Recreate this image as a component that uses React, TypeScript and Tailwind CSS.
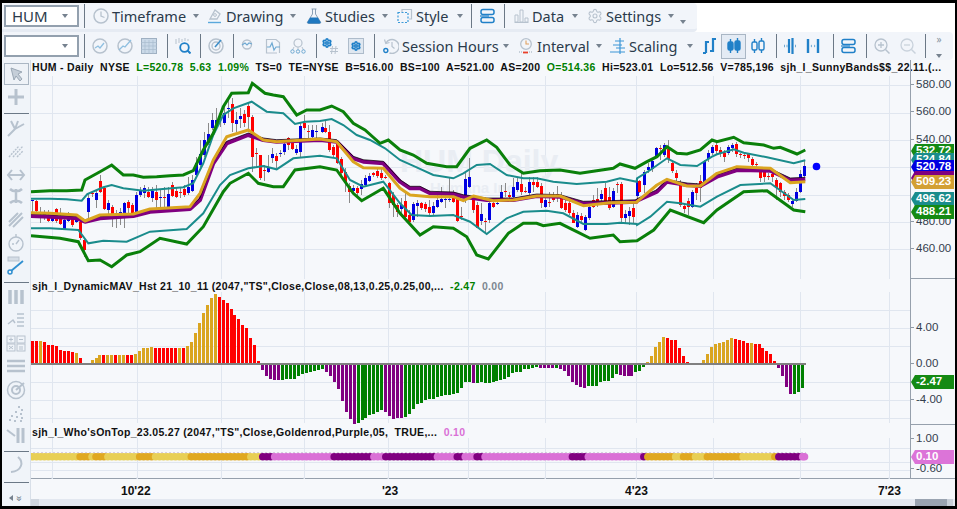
import React from 'react';
import { Settings } from 'lucide-react';

// reading of the reference: [x, wickTop, wickBottom, bodyTop, bodyBottom, 0 red / 1 blue], 3x crop coords
type Candle = number[];
const panelA: Candle[] = [
  [97,420,455,420,421,1],[109,420,455,423,452,0],[121,440,490,460,461,0],[133,450,480,455,470,1],[145,450,485,470,483,0],[157,460,485,473,483,1],[169,445,490,448,483,0],[181,445,495,470,492,0],[193,470,510,480,508,1],[205,455,485,472,482,1],[217,465,500,476,495,0],[229,465,490,476,486,1],[241,480,540,485,535,0],[253,535,590,540,570,0],
  [265,400,475,413,455,1],[277,395,410,400,403,0],[289,390,445,400,420,1],[301,345,400,363,395,0],[313,380,450,385,447,0],[325,420,475,430,450,1],[337,435,500,440,465,0],[349,450,505,474,476,1],[361,445,495,456,459,1],[373,425,503,430,475,1],[385,420,460,427,443,0],[397,430,462,435,458,0],[409,395,460,405,458,1],[421,380,410,392,405,1],[433,375,415,385,398,1],[445,380,415,395,410,0],[457,380,425,393,413,1],[469,375,445,395,420,0],[481,390,440,412,414,1],[493,380,442,410,412,0],[505,380,445,402,440,1],[517,365,412,375,408,0],[529,380,415,393,410,0],[541,380,415,396,398,0],[553,375,410,388,405,0],[565,350,405,382,398,1],[577,345,395,360,392,1],[589,290,350,310,345,1],[601,240,320,283,315,1],[613,215,290,240,285,1],[625,190,255,222,250,1],[637,160,210,180,205,1],[649,145,200,180,195,1],[661,160,200,178,180,0],[673,140,195,160,190,1],[685,115,175,145,147,1],[697,115,215,132,190,0],[709,155,215,180,192,1],[721,145,205,168,178,1],[733,150,200,162,190,0],[745,125,215,138,170,0],[757,165,335,172,290,0],[769,265,320,280,282,0],[781,285,360,285,353,0],[793,315,362,330,332,0],[805,285,340,322,335,1],[817,265,310,282,295,1],[829,280,325,288,302,0],[841,270,290,280,283,1],[853,240,285,252,276,1],[865,230,270,235,255,0],[877,245,270,250,267,0],[889,255,285,267,278,1],[901,190,290,198,275,1],[913,165,210,188,205,0],[925,195,235,212,214,0],[937,195,240,210,232,1],[949,195,240,213,216,1],
];
const panelB: Candle[] = [
  [6,190,220,200,215,1],[16,180,220,205,215,0],[26,195,275,217,270,0],[38,255,290,262,285,0],[50,245,312,250,310,0],[62,290,350,297,340,0],[74,325,395,335,370,0],[86,370,430,378,395,0],[98,375,405,385,393,1],[110,378,408,385,400,0],[122,360,405,372,387,1],[134,345,380,354,375,1],[146,340,365,348,362,1],[158,335,350,340,346,0],[170,320,355,333,348,0],[182,325,360,340,355,0],[194,345,358,350,353,0],
  [206,365,445,370,430,0],[218,395,470,405,435,0],[230,430,470,435,455,0],[242,415,470,435,447,1],[254,400,475,423,470,0],[266,450,485,465,485,0],[278,425,485,432,480,1],[290,420,470,428,438,1],[302,425,450,430,445,0],[314,425,455,432,447,0],[326,420,470,440,460,0],[338,425,465,438,460,1],[350,400,445,420,440,1],[362,380,430,418,425,1],[374,400,445,418,421,1],[386,350,425,418,421,1],[398,390,430,395,425,0],[410,405,485,412,482,0],[422,440,480,467,469,0],[434,340,430,357,405,1],[446,295,385,350,380,1],[458,410,460,420,450,0],[470,425,505,435,503,0],[482,430,495,462,484,1],[494,475,520,482,485,0],[506,420,490,428,480,1],[518,420,445,428,442,0],[530,420,436,428,432,1],[542,375,420,395,420,1],[554,370,412,393,396,0],[566,395,415,405,412,0],[578,355,415,380,410,1],[590,350,395,365,390,1],[602,340,405,372,395,0],[614,380,400,392,395,0],[626,350,405,365,400,1],[638,350,395,365,375,0],[650,352,385,365,382,0],[662,370,445,378,430,0],[674,410,445,420,442,1],[686,395,440,425,427,0],[698,395,425,405,420,0],[710,378,425,403,408,0],[722,395,447,405,445,0],[734,420,455,428,450,0],[746,415,465,430,460,0],[758,450,490,460,490,0],[770,455,505,465,502,1],[782,460,490,467,480,0],[794,465,512,470,510,1],[806,430,480,440,475,1],[818,405,445,420,440,0],[830,385,440,418,425,0],[842,390,430,402,418,1],[854,370,430,385,425,0],[866,380,450,410,445,0],[878,385,445,393,440,1],[890,365,400,372,375,0],[902,365,490,372,475,0],[914,450,490,462,475,1],[926,440,495,453,468,1],[938,430,490,445,470,0],[950,355,425,363,408,1],
];
const panelC: Candle[] = [
  [5,360,400,363,395,0],[20,330,400,335,375,1],[33,310,340,322,330,1],[45,295,335,303,328,1],[57,260,295,265,290,1],[69,255,300,265,267,0],[81,250,290,255,285,1],[93,240,310,268,298,0],[105,300,340,310,333,0],[118,330,365,340,355,0],[130,360,440,375,435,0],[142,430,460,438,447,0],[154,415,465,423,442,0],[166,390,445,395,440,1],[178,370,420,385,400,0],[190,345,425,363,385,0],[202,300,370,303,365,1],[214,270,305,280,298,1],[226,255,285,262,278,1],[238,250,285,255,272,0],[250,262,290,270,280,0],[262,270,305,280,290,0],[274,255,285,262,280,1],[286,250,275,255,265,1],[298,245,290,252,282,0],[310,278,295,283,285,0],[322,280,298,285,287,0],[334,280,305,283,295,0],[346,290,320,298,315,0],[358,305,322,313,316,0],[370,330,365,333,355,0],[382,330,365,335,350,0],[394,340,360,347,350,0],[406,338,365,342,350,0],[418,355,420,360,385,0],[430,365,410,370,395,0],[442,390,420,395,408,0],[454,400,425,405,420,0],[466,415,440,423,431,1],[478,385,425,396,423,1],[490,330,400,343,395,1],[502,300,352,318,348,1],
];

const scr = (off: number, rows: number[][]) => rows.map(([x, y]) => `${(off + x / 3).toFixed(1)},${(60 + y / 3).toFixed(1)}`);
const band = (a: number[][], b: number[][], c: number[][]) => [...scr(0, a), ...scr(320, b), ...scr(637, c)].join(' ');

const greenTop = band(
  [[93,395],[150,392],[200,392],[245,390],[255,360],[300,335],[335,315],[370,345],[400,345],[430,352],[470,350],[510,347],[550,345],[580,332],[610,270],[640,220],[670,140],[695,100],[745,98],[757,70],[795,100],[820,105],[850,110],[890,165],[920,150],[960,150]],
  [[35,138],[70,155],[100,190],[135,210],[180,250],[205,240],[240,270],[280,285],[320,310],[380,320],[410,320],[450,265],[500,240],[530,262],[570,315],[610,340],[660,332],[720,330],[780,340],[880,325],[900,312],[945,325]],
  [[30,305],[60,290],[90,260],[120,280],[150,282],[190,270],[225,240],[240,245],[290,232],[320,248],[380,255],[410,265],[430,262],[480,282],[505,270]],
);
const tealTop = band(
  [[93,416],[150,416],[200,418],[245,422],[262,402],[310,382],[335,375],[370,385],[430,392],[480,388],[550,382],[580,370],[610,310],[640,225],[670,165],[700,145],[755,125],[800,155],[850,160],[885,192],[915,185],[960,183]],
  [[35,177],[70,195],[110,225],[150,240],[195,265],[240,300],[290,322],[340,345],[400,355],[430,340],[470,315],[510,312],[560,345],[610,355],[650,355],[700,365],[770,372],[860,365],[900,355],[950,365]],
  [[0,355],[40,330],[90,295],[130,315],[180,318],[225,290],[240,283],[290,268],[320,278],[390,292],[470,310],[505,301]],
);
const purpleMid = band(
  [[93,468],[150,470],[230,475],[255,485],[300,475],[400,468],[450,455],[570,447],[600,420],[640,310],[680,250],[745,225],[790,240],[830,245],[960,240]],
  [[50,245],[100,295],[130,305],[190,310],[240,365],[270,385],[300,385],[330,400],[400,402],[430,410],[500,420],[580,420],[650,408],[720,410],[790,430],[870,428],[950,425]],
  [[0,422],[60,395],[90,365],[150,375],[190,378],[240,350],[300,330],[400,332],[460,360],[505,358]],
);
const goldMid = band(
  [[93,458],[150,460],[230,465],[255,483],[300,465],[400,462],[450,447],[570,440],[600,400],[640,300],[680,230],[745,210],[790,240],[830,245],[960,237]],
  [[50,245],[100,305],[130,323],[190,325],[240,385],[270,405],[330,410],[400,410],[430,422],[460,408],[520,422],[580,420],[650,408],[720,408],[790,437],[870,428],[950,427]],
  [[0,425],[60,375],[90,358],[150,378],[190,378],[240,340],[300,320],[400,325],[460,368],[505,365]],
);
const tealLow = band(
  [[93,505],[150,505],[235,510],[265,550],[310,542],[380,545],[450,515],[560,507],[610,460],[660,375],[690,345],[745,325],[790,318],[830,328],[880,295],[960,287]],
  [[50,295],[90,360],[130,380],[190,365],[240,430],[275,465],[330,468],[400,465],[450,485],[500,522],[560,475],[610,455],[680,452],[730,460],[790,492],[860,492],[900,488],[950,492]],
  [[0,495],[40,470],[90,425],[130,430],[190,440],[240,410],[310,375],[400,370],[470,420],[505,417]],
);
const greenLow = band(
  [[93,527],[180,535],[235,545],[265,602],[300,600],[335,620],[380,585],[420,575],[480,535],[560,552],[610,500],[670,395],[690,370],[745,340],[775,370],[820,380],[850,380],[885,330],[960,320]],
  [[50,330],[100,400],[125,422],[190,385],[240,460],[300,525],[340,500],[400,505],[440,530],[470,585],[505,597],[565,520],[610,490],[650,490],[670,497],[720,490],[770,515],[810,535],[880,525],[900,545],[950,542]],
  [[0,542],[50,510],[100,450],[200,488],[240,450],[320,395],[390,392],[470,450],[505,455]],
);

const histColors: Record<string, string> = { r: '#ff0000', g: '#daa520', p: '#800080', n: '#008000' };
const hist = 'r23 r23 g23 r22 r19 r19 r18 r14 r13 r13 r12 g11 r6 r1 g1 g4 g6 g9 r9 g9 g9 r9 g9 g9 r9 r9 g10 g13 g16 g16 g17 r16 r16 r16 r16 r16 r16 g16 r16 g18 g22 g31 g41 g51 g59 g66 g70 r67 r64 r61 r55 r49 r45 r39 r36 r26 r19 r3 p6 p12 p15 p16 p16 n16 n15 n15 n15 n12 n10 n9 n8 n7 n6 n5 p8 p12 p18 p25 p37 p48 p55 p60 n59 n56 n54 n51 n50 n48 n46 p48 p52 p55 p54 p54 n53 n50 n45 n40 n39 n36 n35 n35 n33 n32 n31 n31 n30 n29 n24 n18 n18 p19 n19 n18 n19 n19 n18 n17 n16 n15 n13 n9 n8 n8 n5 n5 n4 n3 p4 p4 p4 p4 n4 p5 p7 p12 p18 p21 p23 p24 n22 n22 n22 n18 n17 n17 n14 n10 p11 p12 p12 p12 n8 n7 n3 g2 g8 g17 g22 g27 r26 r24 r24 r16 r8 r2 r1 r1 r1 g4 g10 g17 g20 g21 g22 g24 g26 r25 r24 r23 r21 g21 r20 r20 r16 r13 r10 r3 p4 p12 p23 p30 n30 n28 n24'
  .split(' ')
  .map((t) => ({ c: t[0], h: Number(t.slice(1)) }));

// who's on top ribbon: [segment end x, colour]
const ribbon: [number, string][] = [[78,'#e8cf55'],[90,'#e0a820'],[93,'#e8cf55'],[105,'#e0a820'],[137,'#e8cf55'],[153,'#e0a820'],[188,'#e8cf55'],[250,'#e0a820'],[262,'#e8cf55'],[273,'#800080'],[333,'#da70d6'],[370,'#800080'],[385,'#da70d6'],[437,'#800080'],[457,'#da70d6'],[462,'#800080'],[477,'#da70d6'],[485,'#800080'],[569,'#da70d6'],[585,'#800080'],[640,'#da70d6'],[645,'#800080'],[674,'#e0a820'],[681,'#e8cf55'],[694,'#e0a820'],[705,'#e8cf55'],[742,'#e0a820'],[772,'#e8cf55'],[777,'#e0a820'],[802,'#800080'],[809,'#da70d6']];
const ribbonColor = (x: number) => (ribbon.find(([end]) => x <= end) ?? ribbon[ribbon.length - 1])[1];

const gridX = [52, 137, 221, 304, 388, 468, 545, 636, 713, 800, 889];

function Candles({ rows, off }: { rows: Candle[]; off: number }) {
  return (
    <>
      {rows.map(([x, wt, wb, bt, bb, c], i) => {
        const cx = Math.round(off + x / 3);
        return (
          <g key={i} shapeRendering="crispEdges">
            <rect x={cx} y={60 + wt / 3} width={1} height={(wb - wt) / 3} fill="#8a8a8a" />
            <rect x={cx - 1} y={60 + bt / 3} width={3} height={Math.max((bb - bt) / 3, 1)} fill={c ? '#0000e0' : '#ff0000'} />
          </g>
        );
      })}
    </>
  );
}

function GridLines({ ys, top, bottom }: { ys: number[]; top: number; bottom: number }) {
  return (
    <g stroke="#e0e6ef" strokeWidth="1" shapeRendering="crispEdges">
      {ys.map((y) => <line key={y} x1="31" x2="910" y1={y} y2={y} />)}
      {gridX.map((x) => <line key={x} x1={x} x2={x} y1={top} y2={bottom} />)}
    </g>
  );
}

function PricePlot() {
  return (
    <svg className="absolute inset-0" width="879" height="219" viewBox="31 60 879 219">
      <GridLines ys={[85, 113, 140, 167, 195, 222, 249]} top={76} bottom={279} />
      <text x="400" y="172" fontSize="32" fontWeight="700" fill="#e9edf3" fontFamily="Liberation Sans, sans-serif">HUM Daily</text>
      <text x="430" y="193" fontSize="15" fontWeight="700" fill="#e9edf3" fontFamily="Liberation Sans, sans-serif">Humana Inc.</text>
      <Candles rows={panelA} off={0} />
      <Candles rows={panelB} off={320} />
      <Candles rows={panelC} off={637} />
      <polyline points={purpleMid} fill="none" stroke="#800080" strokeWidth="4" strokeLinejoin="round" />
      <polyline points={purpleMid} fill="none" stroke="#000" strokeWidth="1" transform="translate(0,-2)" opacity="0.7" />
      <polyline points={goldMid} fill="none" stroke="#daa520" strokeWidth="3" strokeLinejoin="round" />
      <polyline points={tealTop} fill="none" stroke="#1a8c8c" strokeWidth="2" />
      <polyline points={tealLow} fill="none" stroke="#1a8c8c" strokeWidth="2" />
      <polyline points={greenTop} fill="none" stroke="#0a800a" strokeWidth="3" />
      <polyline points={greenLow} fill="none" stroke="#0a800a" strokeWidth="3" />
      <circle cx="816.5" cy="166.5" r="3.8" fill="#0000ff" />
    </svg>
  );
}

function HistPlot() {
  return (
    <svg className="absolute inset-0" width="879" height="146" viewBox="31 279 879 146">
      <GridLines ys={[310, 328, 346, 382, 400, 418]} top={292} bottom={423} />
      <g shapeRendering="crispEdges">
        {hist.map((b, i) => {
          const x = Math.round(31 + 3.97 * i);
          const up = b.c === 'r' || b.c === 'g';
          return <rect key={i} x={x} y={up ? 364 - b.h : 364} width={3} height={b.h} fill={histColors[b.c]} />;
        })}
        <rect x="31" y="363" width="775" height="2" fill="#808080" />
      </g>
    </svg>
  );
}

function RibbonPlot() {
  return (
    <svg className="absolute inset-0" width="879" height="54" viewBox="31 425 879 54">
      <GridLines ys={[448, 462, 470]} top={438} bottom={479} />
      <line x1="33" x2="806" y1="453" y2="453" stroke="#b9a6c4" strokeDasharray="2 2" />
      {hist.map((_, i) => {
        const x = 32.5 + 3.97 * i;
        return <circle key={i} cx={x} cy="456.7" r="3.8" fill={ribbonColor(x)} />;
      })}
      <circle cx="804.5" cy="456.7" r="3.8" fill="#da70d6" />
      <g stroke="#e0e6ef">{gridX.map((x) => <line key={x} x1={x} x2={x} y1={477} y2={479} />)}</g>
    </svg>
  );
}

const gy = '#b7c2ce';
const bl = '#2080c8';

function Ico({ children, className = '' }: { children: React.ReactNode; className?: string }) {
  return <svg width="16" height="16" viewBox="0 0 16 16" fill="none" className={`shrink-0 ${className}`}>{children}</svg>;
}

function Caret({ className = '' }: { className?: string }) {
  return <span className={`h-0 w-0 shrink-0 border-x-[3.5px] border-t-[4px] border-x-transparent border-t-[#76828f] ${className}`} />;
}

function Sep({ className = '' }: { className?: string }) {
  return <span className={`h-[24px] w-px shrink-0 bg-[#6b7886] ${className}`} />;
}

function Menu({ icon, label, className, labelClass, caretClass }: { icon: React.ReactNode; label: string; className: string; labelClass: string; caretClass: string }) {
  return (
    <>
      <span className={`shrink-0 ${className}`}>{icon}</span>
      <span className={`ml-[3px] shrink-0 whitespace-nowrap text-[14.5px] leading-none text-[#2a3a4b] ${labelClass}`}>{label}</span>
      <Caret className={caretClass} />
    </>
  );
}

function Combo({ value }: { value?: string }) {
  return (
    <div className="ml-[2px] flex h-[22px] w-[75px] shrink-0 items-center border-2 border-[#93a0ae] bg-white pl-[6px] pr-[9px]">
      <span className="flex-1 text-[15px] leading-none text-[#2a3a4b]">{value}</span>
      <Caret className="border-x-[3px] border-t-[3px]" />
    </div>
  );
}

function CandleIcon({ fill }: { fill: boolean }) {
  const f = fill ? bl : 'none';
  return (
    <Ico>
      <path d="M4.5 1v14M11.5 0v15" stroke={bl} strokeWidth="1.4" />
      <rect x="2" y="4" width="5" height="8" rx="1.5" fill={fill ? bl : '#f1f5fa'} stroke={bl} strokeWidth="1.4" />
      <rect x="9" y="3" width="5" height="9" rx="1.5" fill={fill ? bl : '#f1f5fa'} stroke={bl} strokeWidth="1.4" />
      <path d="" fill={f} />
    </Ico>
  );
}

const LayoutIcon = () => (
  <Ico>
    <rect x="2" y="1.5" width="13" height="5" rx="2" stroke={bl} strokeWidth="1.5" />
    <rect x="2" y="9.5" width="13" height="5" rx="2" stroke={bl} strokeWidth="1.5" />
    <path d="M1 8h9" stroke={bl} strokeWidth="1.2" />
  </Ico>
);

const GearBlue = () => <Settings size={10} strokeWidth={4} color={bl} />;

function TopToolbar() {
  return (
    <div className="flex h-[29px] w-[695px] items-center rounded-r-[4px] border-b-[3px] border-[#e6ebf3] bg-[#f2f5fa]">
      <Combo value="HUM" />
      <Sep className="ml-[5px]" />
      <Menu
        className="ml-[8px]"
        labelClass="w-[72px]"
        caretClass="ml-[9px]"
        label="Timeframe"
        icon={<Ico><circle cx="8" cy="8" r="7" stroke={gy} strokeWidth="1.5" /><path d="M8 3.5V8l3.5 1.5" stroke={gy} strokeWidth="1.3" /></Ico>}
      />
      <Menu
        className="ml-[8px]"
        labelClass="w-[56px]"
        caretClass="ml-[8px]"
        label="Drawing"
        icon={<Ico><path d="M3 11 8 2l5 4-3 5z" stroke={gy} strokeWidth="1.3" /><circle cx="8" cy="7" r="1.4" stroke={gy} /><path d="M1 14.5h13" stroke="#5aa8dc" strokeWidth="1.4" /></Ico>}
      />
      <Menu
        className="ml-[10px]"
        labelClass="w-[48px]"
        caretClass="ml-[9px]"
        label="Studies"
        icon={<Ico><path d="M5.5 1h5M6.5 1v5L1.5 14a1 1 0 0 0 1 1.5h11a1 1 0 0 0 1-1.5l-5-8V1" stroke="#8aa0b6" strokeWidth="1" /><path d="M4.2 9.5h7.6l3 5-.8 1H2l-.8-1z" fill="#1f78c0" /></Ico>}
      />
      <Menu
        className="ml-[9px]"
        labelClass="w-[32px]"
        caretClass="ml-[9px]"
        label="Style"
        icon={<Ico><path d="M5 4V1.5h9.5V11H12" stroke={gy} strokeWidth="1.2" /><rect x="1" y="4.5" width="10" height="10" stroke="#3a9ad9" strokeWidth="1.2" strokeDasharray="2 1.5" /></Ico>}
      />
      <Sep className="ml-[8px]" />
      <span className="ml-[7px]"><LayoutIcon /></span>
      <Sep className="ml-[9px]" />
      <Menu
        className="ml-[8px]"
        labelClass="w-[30px]"
        caretClass="ml-[10px]"
        label="Data"
        icon={<Ico><path d="M1.5 14.5h14" stroke={gy} /><path d="M2 7h3v7H2zM7 2h3v12H7zM12 10h3v4h-3z" stroke={gy} /></Ico>}
      />
      <Menu
        className="ml-[9px]"
        labelClass="w-[53px]"
        caretClass="ml-[9px]"
        label="Settings"
        icon={<Settings size={16} strokeWidth={1.6} color={gy} />}
      />
      <Caret className="ml-[6px] mt-[12px] border-x-[3px] border-t-[3px]" />
    </div>
  );
}

function SecondToolbar() {
  return (
    <div className="flex h-[28px] w-[951px] items-center rounded-r-[4px] bg-[#f2f5fa]">
      <Combo />
      <Sep className="ml-[5px]" />
      <span className="ml-[7px]"><Ico><circle cx="8" cy="8" r="7" stroke={gy} strokeWidth="1.5" /><path d="M3 10l3-2 2 2 4-5" stroke="#8fbfe0" strokeWidth="1.3" /></Ico></span>
      <span className="ml-[9px]"><Ico><circle cx="8" cy="8" r="7" stroke={gy} strokeWidth="1.5" /><path d="M2 12l4-4 2 1 6-7" stroke="#8fbfe0" strokeWidth="1.3" /></Ico></span>
      <span className="ml-[8px]"><Ico><rect x="0.5" y="0.5" width="15" height="15" fill="#cad9e8" stroke="#9fb0c2" /><path d="M0 4.5h16M0 8h16M0 11.5h16M4 2v14M8 2v14M12 2v14" stroke="#a9bccf" strokeWidth=".7" /></Ico></span>
      <Sep className="ml-[10px]" />
      <span className="ml-[7px]"><Ico><path d="M1 1v5M4 0v5M7 1v3M10 0v3M13 1v2" stroke={gy} strokeWidth="1" /><circle cx="9.5" cy="9.5" r="4.3" stroke={bl} strokeWidth="1.8" /><path d="m12.5 12.5 3 3" stroke={bl} strokeWidth="2" /></Ico></span>
      <Sep className="ml-[9px]" />
      <span className="ml-[7px]"><Ico><circle cx="8" cy="8" r="7" stroke={gy} strokeWidth="1.5" /><circle cx="8" cy="8" r="4" stroke={gy} strokeWidth="1.3" /><path d="M7 9l6-7" stroke="#3f8fc8" strokeWidth="1.6" /></Ico></span>
      <Sep className="ml-[9px]" />
      <span className="ml-[5px]"><Ico><circle cx="8" cy="6.5" r="4.5" stroke={gy} strokeWidth="1.4" /><path d="M3 7l3-2 2 2 2-2 3 1" stroke="#6fa9d2" strokeWidth="1.2" /></Ico></span>
      <span className="ml-[10px]"><Ico><path d="M12 15H1.5V1.5H11l3.5 3V15" stroke={gy} strokeWidth="1.2" /><path d="M2 9h3l2-4 2 7 2-3h4" stroke="#6fa9d2" strokeWidth="1.2" /></Ico></span>
      <span className="ml-[9px]"><Ico><circle cx="8" cy="5" r="4" stroke={gy} strokeWidth="1.2" /><path d="M4 9 2.5 12M8 9v3M12 9l1.5 3" stroke={gy} /><circle cx="2.5" cy="13.5" r="1.7" stroke="#6fa9d2" /><circle cx="8" cy="13.5" r="1.7" stroke="#6fa9d2" /><circle cx="13.5" cy="13.5" r="1.7" stroke="#6fa9d2" /></Ico></span>
      <Sep className="ml-[10px]" />
      <span className="relative ml-[5px] h-[16px] w-[16px] shrink-0">
        <GearBlue />
        <svg width="8" height="8" viewBox="0 0 8 8" className="absolute bottom-0 right-0"><path d="M2.5 0 1.5 8M6 0 5 8M0 2.5h8M0 5.5h8" stroke={gy} /></svg>
      </span>
      <span className="ml-[10px] flex h-[16px] w-[16px] shrink-0 items-center justify-center border border-[#aebccb] bg-[#dfe7f0]"><GearBlue /></span>
      <Sep className="ml-[10px]" />
      <Menu
        className="ml-[8px]"
        labelClass="w-[92px]"
        caretClass="ml-[9px]"
        label="Session Hours"
        icon={<Ico><path d="M3 5a7 7 0 1 1 3.5 10" stroke={gy} strokeWidth="1.4" /><path d="M1.5 1.5 2.8 5.5 6.5 4.5M9 4v4.5l2.5 2" stroke={gy} strokeWidth="1.2" /><circle cx="2.8" cy="12.5" r="2" stroke={bl} strokeWidth="1.4" /></Ico>}
      />
      <Menu
        className="ml-[9px]"
        labelClass="w-[48px]"
        caretClass="ml-[11px]"
        label="Interval"
        icon={<Ico><circle cx="8" cy="6" r="5.3" stroke={gy} strokeWidth="1.3" /><path d="M8 2.5V6h3" stroke="#e0a060" strokeWidth="1.1" /><path d="M1 14h3" stroke={gy} strokeWidth="1.4" strokeDasharray="1 1" /><path d="M5 14.5h5" stroke="#e8402a" strokeWidth="1.8" /><path d="M11 14h4" stroke={gy} strokeWidth="1.4" strokeDasharray="1 1" /></Ico>}
      />
      <Menu
        className="ml-[8px]"
        labelClass="w-[47px]"
        caretClass="ml-[11px]"
        label="Scaling"
        icon={<Ico><path d="M10 0v16M5 3h9M3 7h9M6 10h9M0 14h15" stroke="#3b96d6" strokeWidth="1.2" /></Ico>}
      />
      <span className="ml-[8px]"><Ico><path d="M5 15V4h3M12 14V1h3M2 15h3M9 13h3" stroke={bl} strokeWidth="2.2" /></Ico></span>
      <span className="ml-[4px] flex h-[25px] w-[25px] shrink-0 items-center justify-center border border-[#a9b6c4] bg-[#e4ebf4]"><CandleIcon fill /></span>
      <span className="ml-[4px]"><CandleIcon fill={false} /></span>
      <Sep className="ml-[10px]" />
      <span className="ml-[5px]"><Ico><path d="M7 1v14M10.5 0v16" stroke={bl} strokeWidth="2.2" /><path d="M2 8h3.5M13 8h2" stroke="#6fa9d2" strokeWidth="2.6" strokeDasharray="1 1.5" /></Ico></span>
      <span className="ml-[7px]"><Ico><path d="M3 1v14M13 1v14" stroke={bl} strokeWidth="2.4" /><path d="M5.5 8 7 6.5v3zM10.5 8 9 6.5v3z" fill="#6fa9d2" /></Ico></span>
      <Sep className="ml-[12px]" />
      <span className="ml-[6px]"><LayoutIcon /></span>
      <Sep className="ml-[10px]" />
      <span className="ml-[7px]"><Ico><circle cx="7" cy="7" r="6" stroke={gy} strokeWidth="1.3" /><path d="M4 7h6M7 4v6" stroke={gy} strokeWidth="1.3" /><path d="m11.5 11.5 4 4" stroke={gy} strokeWidth="1.5" /></Ico></span>
      <span className="ml-[10px]"><Ico><circle cx="7" cy="7" r="6" stroke="#c9d2dc" strokeWidth="1.3" /><path d="M4 7h6" stroke="#c9d2dc" strokeWidth="1.3" /><path d="m11.5 11.5 4 4" stroke="#c9d2dc" strokeWidth="1.5" /></Ico></span>
      <Sep className="ml-[9px]" />
      <div className="ml-[10px] flex h-[24px] flex-col items-center justify-between">
        <span className="text-[10px] leading-none text-[#8b96a2]">»</span>
        <Caret className="border-x-[3px] border-t-[3px]" />
      </div>
    </div>
  );
}

const S = { stroke: gy, strokeWidth: 2, fill: 'none' };

function LeftIcon({ children, className }: { children: React.ReactNode; className: string }) {
  return <svg width="20" height="20" viewBox="0 0 20 20" className={`mx-auto shrink-0 ${className}`}>{children}</svg>;
}

function SideSep({ className }: { className: string }) {
  return <div className={`ml-[2px] h-px w-[25px] shrink-0 bg-[#6b7886] ${className}`} />;
}

function LeftToolbar() {
  return (
    <div className="flex w-[29px] shrink-0 flex-col border-r border-[#d8dfe8] bg-[#f0f4f9]">
      <div className="ml-[2px] mt-[3px] flex h-[22px] w-[25px] shrink-0 items-center justify-center border border-[#aab6c3] bg-[#eef2f7]">
        <svg width="15" height="15" viewBox="0 0 15 15"><path d="M2 1l11 4-4 2 4 5-2 2-4-5-2 4z" fill="#c5ced8" stroke="#9ba8b5" /></svg>
      </div>
      <LeftIcon className="mt-[2px]"><path d="M10 2v16M2 10h16" {...S} strokeWidth={3} /></LeftIcon>
      <SideSep className="mt-[6px]" />
      <LeftIcon className="mt-[4px]"><path d="M2 18l7-7M9 11 5 3M9 11l3-8M9 11l9-5" {...S} /></LeftIcon>
      <LeftIcon className="mt-[2px]"><path d="M3 17 13 6M7 17l10-11M11 17l6-6" {...S} strokeWidth={1.4} strokeDasharray="2 1" /></LeftIcon>
      <LeftIcon className="mt-[5px]"><path d="M2 10h16M6 5l-4 5 4 5M14 5l4 5-4 5" {...S} /></LeftIcon>
      <LeftIcon className="mt-[1px]"><path d="M10 3v14M4 3c3 3 9 3 12 0M4 17c3-3 9-3 12 0" {...S} strokeWidth={2.5} /></LeftIcon>
      <LeftIcon className="mt-[4px]"><path d="M3 12 12 3M3 16l13-13M7 17l10-10" {...S} /></LeftIcon>
      <LeftIcon className="mt-[3px]"><circle cx="10" cy="11" r="7" {...S} strokeWidth={1.4} /><path d="M10 1v3M10 11l3-4M6 11h2" {...S} strokeWidth={1.4} /></LeftIcon>
      <LeftIcon className="mt-[2px]"><rect x="2" y="2" width="11" height="4" fill="#d5dde6" stroke={gy} /><path d="M17 6 5 16" stroke="#2f8fd0" strokeWidth="1.8" /><circle cx="4" cy="17" r="2" fill="none" stroke="#2f8fd0" strokeWidth="1.5" /></LeftIcon>
      <SideSep className="mt-[7px]" />
      <LeftIcon className="mt-[4px]"><path d="M4 3v14M10 3v14M16 3v14" {...S} strokeWidth={3.5} /></LeftIcon>
      <LeftIcon className="mt-[3px]"><path d="M11 4h7M11 8h7M11 12h7M11 16h7" {...S} strokeWidth={1.5} /><path d="M2 14l5-4 2 3" {...S} strokeWidth={1.5} /></LeftIcon>
      <LeftIcon className="mt-[3px]"><rect x="1" y="3" width="8" height="7" fill="none" stroke={gy} /><rect x="11" y="3" width="8" height="7" fill="none" stroke={gy} /><rect x="1" y="11" width="8" height="7" fill="none" stroke={gy} /><rect x="11" y="11" width="8" height="7" fill="none" stroke={gy} /><path d="M3 6.5h4M5 4.5v4M13 6.5h4M3 13l4 3M7 13l-4 3M13 14h4M13 16h4" stroke={gy} /></LeftIcon>
      <LeftIcon className="mt-[3px]"><path d="M1 5h18M1 10h18M1 15h18" {...S} strokeWidth={2.4} /></LeftIcon>
      <LeftIcon className="mt-[4px]"><circle cx="10" cy="10" r="8.5" {...S} strokeWidth={1.5} /><circle cx="10" cy="10" r="4" {...S} /><path d="M10 10 18 3" {...S} /></LeftIcon>
      <LeftIcon className="mt-[3px]"><path d="M12 4h2M15 7h2M9 9h2M14 11h2M5 13h2M10 14h2M15 15h2M3 17h2M8 18h2M14 18h2" stroke={gy} strokeWidth="1.8" /></LeftIcon>
      <LeftIcon className="mt-[2px]"><path d="M1 5l8 6" stroke={gy} strokeWidth="2" /><path d="M12 3v15M17 3v15" {...S} strokeWidth={3} /></LeftIcon>
      <SideSep className="mt-[6px]" />
      <LeftIcon className="mt-[3px]"><path d="M12 2c6 5 4 14-7 15" {...S} strokeWidth={2} /></LeftIcon>
      <SideSep className="mt-[7px]" />
      <div className="mt-[7px] flex h-[16px] shrink-0 items-center justify-between px-[6px]">
        <Caret className="-rotate-[270deg] border-x-[2.5px] border-t-[3px] border-t-[#5e6a76]" />
        <span className="rotate-90 text-[11px] leading-none text-[#6b7886]">»</span>
      </div>
    </div>
  );
}

function Title({ children }: { children: React.ReactNode }) {
  return <div className="relative flex h-[16px] items-center whitespace-pre pl-[1px] font-['Liberation_Sans',Arial,sans-serif] text-[10.5px] font-bold tracking-[0.3px] text-[#101010]">{children}</div>;
}

const tagShape = 'absolute left-0 flex h-[14px] w-[43px] items-center pl-[5px] text-[11.5px] font-bold leading-none text-white [clip-path:polygon(4px_0,100%_0,100%_100%,4px_100%,0_50%)]';

function AxisLabel({ className, children }: { className: string; children: React.ReactNode }) {
  return (
    <span className={`absolute left-0 flex items-center text-[11.5px] font-medium leading-none text-[#33404d] ${className}`}>
      <span className="mr-[2px] h-px w-[3px] bg-[#8f9aa6]" />
      {children}
    </span>
  );
}

export default function App() {
  return (
    <div className="h-[509px] w-[957px] overflow-hidden bg-black pb-[3px] pl-[2px] pr-[2px] pt-[3px] font-['Noto_Sans',sans-serif]">
      <div className="flex h-full flex-col bg-white">
        <TopToolbar />
        <SecondToolbar />
        <div className="flex min-h-0 flex-1 bg-[#f6f8fb]">
          <LeftToolbar />
          <div className="flex w-[879px] shrink-0 flex-col font-['Liberation_Sans',Arial,sans-serif]">
            <div className="relative h-[219px]">
              <PricePlot />
              <Title>
                <span>HUM - Daily  NYSE  </span><span className="text-[#008000]">L=520.78  5.63  1.09%</span><span>  TS=0  TE=NYSE  B=516.00  BS=100  A=521.00  AS=200  </span><span className="text-[#008000]">O=514.36</span><span>  Hi=523.01  Lo=512.56  V=785,196  sjh_I_SunnyBands$$_22.11.(...</span>
              </Title>
            </div>
            <div className="relative h-[146px]">
              <HistPlot />
              <Title>
                <span>sjh_I_DynamicMAV_Hst 21_10_11 (2047,"TS",Close,Close,08,13,0.25,0.25,00,...  </span><span className="text-[#008000]">-2.47</span><span className="text-[#7d8790]">  0.00</span>
              </Title>
            </div>
            <div className="relative h-[54px] border-b border-[#96a0ac]">
              <RibbonPlot />
              <Title>
                <span>sjh_I_Who'sOnTop_23.05.27 (2047,"TS",Close,Goldenrod,Purple,05,  TRUE,...  </span><span className="text-[#da70d6]">0.10</span>
              </Title>
            </div>
            <div className="relative h-[20px] text-[12px] font-bold text-[#101010]">
              <span className="absolute left-[90px] top-[3px]">10'22</span>
              <span className="absolute left-[351px] top-[3px]">'23</span>
              <span className="absolute left-[594px] top-[3px]">4'23</span>
              <span className="absolute left-[847px] top-[3px]">7'23</span>
            </div>
            <div className="flex h-[7px] bg-[#e3e8f0]">
              <div className="w-[8px] bg-[#cfd6df]" />
            </div>
          </div>
          <div className="flex w-[45px] shrink-0 flex-col font-['Liberation_Sans',Arial,sans-serif]">
            <div className="relative h-[219px] border-b border-l border-[#96a0ac]">
              <AxisLabel className="top-[19px]">580.00</AxisLabel>
              <AxisLabel className="top-[46px]">560.00</AxisLabel>
              <AxisLabel className="top-[74px]">540.00</AxisLabel>
              <AxisLabel className="top-[156px]">480.00</AxisLabel>
              <AxisLabel className="top-[183px]">460.00</AxisLabel>
              <span className={`${tagShape} top-[84px] bg-[#148a14]`}>532.72</span>
              <span className={`${tagShape} top-[93px] bg-[#1a8c8c]`}>524.84</span>
              <span className={`${tagShape} top-[100px] bg-[#0000e0]`}>520.78</span>
              <span className={`${tagShape} top-[111px] bg-[#800080]`} />
              <span className={`${tagShape} top-[115px] bg-[#d3a033]`}>509.23</span>
              <span className={`${tagShape} top-[132px] bg-[#1a8c8c]`}>496.62</span>
              <span className={`${tagShape} top-[145px] bg-[#148a14]`}>488.21</span>
            </div>
            <div className="relative h-[146px] border-b border-l border-[#96a0ac]">
              <AxisLabel className="top-[43px]">4.00</AxisLabel>
              <AxisLabel className="top-[79px]">0.00</AxisLabel>
              <AxisLabel className="top-[115px]">-4.00</AxisLabel>
              <span className={`${tagShape} top-[96px] bg-[#148a14]`}>-2.47</span>
            </div>
            <div className="relative h-[54px] border-b border-l border-[#96a0ac]">
              <AxisLabel className="top-[8px]">1.00</AxisLabel>
              <AxisLabel className="top-[38px]">-0.60</AxisLabel>
              <span className={`${tagShape} top-[25px] bg-[#dc74d8]`}>0.10</span>
            </div>
            <div className="h-[20px]" />
            <div className="flex h-[7px] justify-start bg-[#e3e8f0]">
              <div className="ml-[5px] w-[32px] bg-[#9aa4b1]" />
              <div className="w-[6px] bg-[#c8cfd8]" />
            </div>
          </div>
        </div>
      </div>
    </div>
  );
}
